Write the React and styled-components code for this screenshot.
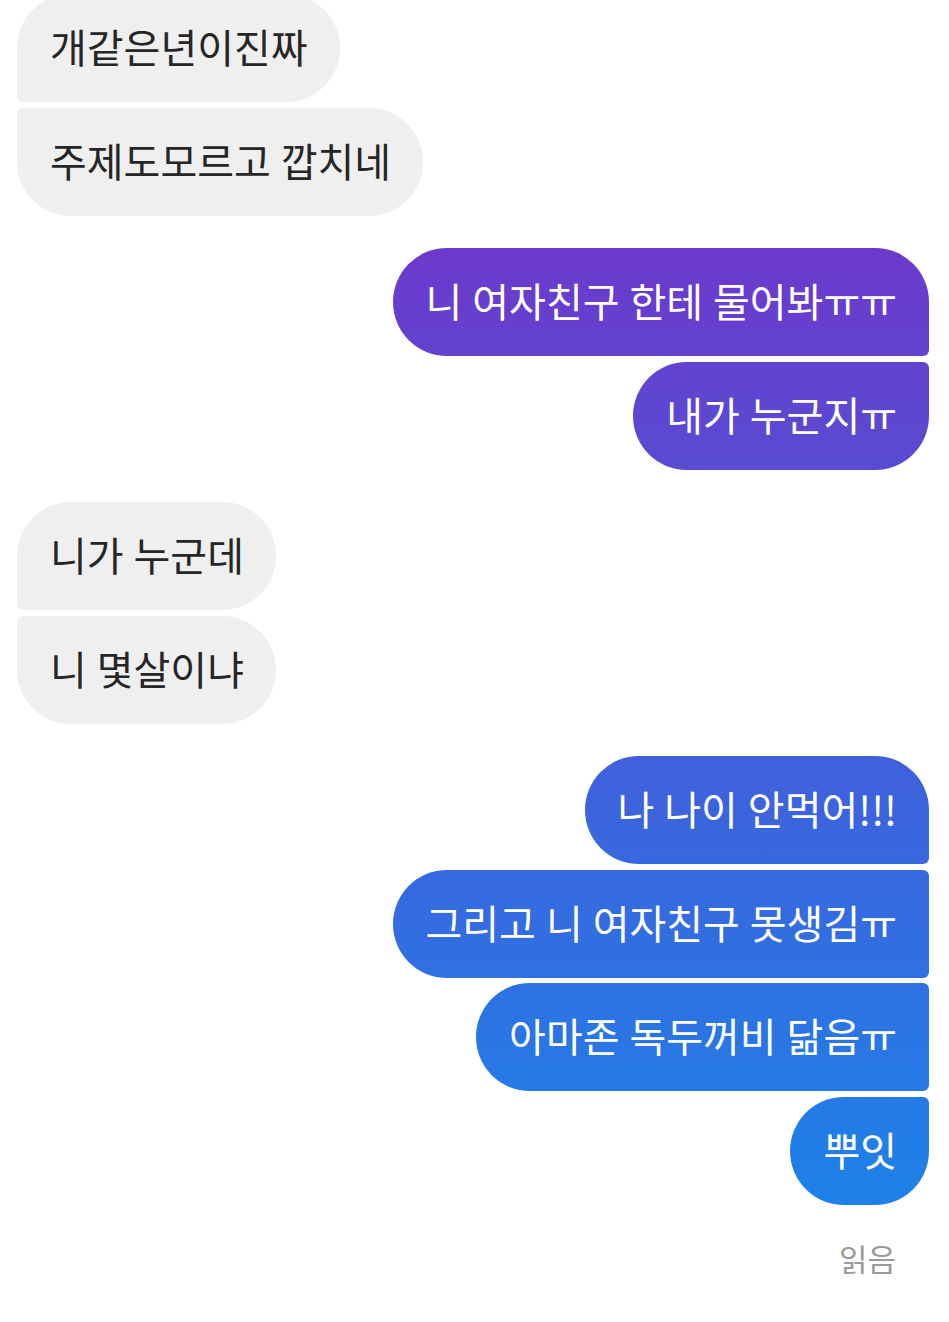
import React from "react";
import styled, { createGlobalStyle } from "styled-components";

const GlobalStyle = createGlobalStyle`
  html, body {
    margin: 0;
    padding: 0;
    background: #ffffff;
  }
  body {
    font-family: "Noto Sans CJK KR", "Noto Sans", sans-serif;
    width: 949px;
    height: 1322px;
    overflow: hidden;
  }
`;

const Thread = styled.div`
  display: flex;
  flex-direction: column;
  padding: 0 20px 0 17px;
  margin-top: -6px;
`;

const Group = styled.div`
  display: flex;
  flex-direction: column;
  align-items: ${(p) => (p.mine ? "flex-end" : "flex-start")};
  gap: 5.5px;
  margin-bottom: 32.5px;
`;

const Bubble = styled.div`
  box-sizing: border-box;
  height: 108px;
  display: flex;
  align-items: center;
  padding: 0 32px 4px 33px;
  font-size: 40px;
  letter-spacing: 0;
  word-spacing: 1px;
  white-space: nowrap;
  border-radius: 54px;
  color: ${(p) => (p.mine ? "#ffffff" : "#262626")};
  background: ${(p) =>
    p.mine
      ? "linear-gradient(180deg, #8a2ec4 0px, #6a3bcc 265px, #5a4ad2 450px, #3e62dc 780px, #1f80e8 1180px, #1a86ea 1322px) fixed"
      : "#efefef"};

  ${(p) =>
    p.mine
      ? `
    ${p.first ? "" : "border-top-right-radius: 6px;"}
    ${p.last ? "" : "border-bottom-right-radius: 6px;"}
  `
      : `
    ${p.first ? "" : "border-top-left-radius: 6px;"}
    ${p.last ? "" : "border-bottom-left-radius: 6px;"}
  `}
`;

const Seen = styled.div`
  align-self: flex-end;
  margin-top: -2px;
  padding-right: 33px;
  font-size: 31px;
  color: #9a9a9a;
`;

const groups = [
  { mine: false, lines: ["개같은년이진짜", "주제도모르고 깝치네"] },
  { mine: true, lines: ["니 여자친구 한테 물어봐ㅠㅠ", "내가 누군지ㅠ"] },
  { mine: false, lines: ["니가 누군데", "니 몇살이냐"] },
  {
    mine: true,
    lines: ["나 나이 안먹어!!!", "그리고 니 여자친구 못생김ㅠ", "아마존 독두꺼비 닮음ㅠ", "뿌잇"],
  },
];

export default function App() {
  return (
    <>
      <GlobalStyle />
      <Thread>
        {groups.map((g, gi) => (
          <Group key={gi} mine={g.mine}>
            {g.lines.map((line, i) => (
              <Bubble
                key={i}
                mine={g.mine}
                first={i === 0}
                last={i === g.lines.length - 1}
              >
                {line}
              </Bubble>
            ))}
          </Group>
        ))}
        <Seen>읽음</Seen>
      </Thread>
    </>
  );
}
